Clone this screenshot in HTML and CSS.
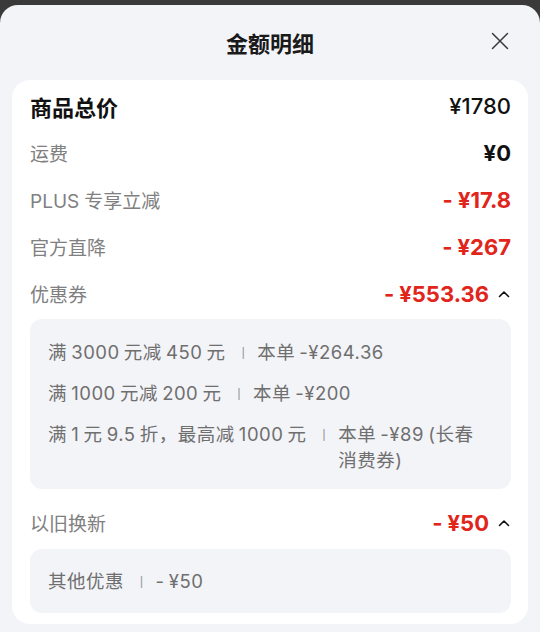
FILE: index.html
```html
<!DOCTYPE html>
<html lang="zh-CN">
<head>
<meta charset="UTF-8" />
<meta name="viewport" content="width=device-width, initial-scale=1" />
<title>金额明细</title>
<link rel="stylesheet" href="styles.css">
</head>
<body>
  <div class="sheet">
    <div class="sheet-head">
      <h1 class="sheet-title">金额明细</h1>
      <button class="close-btn" aria-label="关闭">
        <svg width="18" height="18" viewBox="0 0 18 18"><path d="M1.5 1.5L16.5 16.5M16.5 1.5L1.5 16.5" stroke="#3a3a3a" stroke-width="1.5" stroke-linecap="round" fill="none"/></svg>
      </button>
    </div>

    <div class="card">
      <div class="row row-total">
        <span class="label">商品总价</span>
        <span class="price">¥1780</span>
      </div>
      <div class="row">
        <span class="label">运费</span>
        <span class="price price-bold">¥0</span>
      </div>
      <div class="row">
        <span class="label">PLUS<span class="gap"></span>专享立减</span>
        <span class="price price-red">-<span class="gap"></span>¥17.8</span>
      </div>
      <div class="row">
        <span class="label">官方直降</span>
        <span class="price price-red">-<span class="gap"></span>¥267</span>
      </div>
      <div class="row">
        <span class="label">优惠券</span>
        <span class="price price-red">-<span class="gap"></span>¥553.36
          <svg class="caret" width="12" height="8" viewBox="0 0 12 8"><path d="M1.5 6.5L6 2L10.5 6.5" stroke="#111" stroke-width="1.6" fill="none" stroke-linecap="round" stroke-linejoin="round"/></svg>
        </span>
      </div>
      <div class="detail-box">
        <div class="detail">
          <span class="detail-rule">满 3000 元减 450 元</span>
          <span class="sep">丨</span>
          <span class="detail-amount">本单 -¥264.36</span>
        </div>
        <div class="detail">
          <span class="detail-rule">满 1000 元减 200 元</span>
          <span class="sep">丨</span>
          <span class="detail-amount">本单 -¥200</span>
        </div>
        <div class="detail">
          <span class="detail-rule">满 1 元 9.5 折，最高减 1000 元</span>
          <span class="sep">丨</span>
          <span class="detail-amount">本单 -¥89 (长春消费券)</span>
        </div>
      </div>

      <div class="row row-after-box">
        <span class="label">以旧换新</span>
        <span class="price price-red">-<span class="gap"></span>¥50
          <svg class="caret" width="12" height="8" viewBox="0 0 12 8"><path d="M1.5 6.5L6 2L10.5 6.5" stroke="#111" stroke-width="1.6" fill="none" stroke-linecap="round" stroke-linejoin="round"/></svg>
        </span>
      </div>
      <div class="detail-box detail-box-small">
        <div class="detail">
          <span class="detail-rule">其他优惠</span>
          <span class="sep">丨</span>
          <span class="detail-amount">- ¥50</span>
        </div>
      </div>
    </div>
  </div>
</body>
</html>
```

FILE: styles.css
```css
body {
  margin: 0;
  background: #3a3a3a;
  font-family: Inter, "Noto Sans CJK SC", sans-serif;
}

/* 底部弹层 */
.sheet {
  margin-top: 5px;
  height: 627px;
  background: #f3f4f8;
  border-radius: 18px 18px 0 0;
  overflow: hidden;
}

.sheet-head {
  position: relative;
  height: 75px;
  display: flex;
  align-items: center;
  justify-content: center;
}

.sheet-title {
  margin: 0;
  font-family: "Noto Sans CJK SC", sans-serif;
  font-size: 22px;
  font-weight: 700;
  color: #1a1a1a;
  line-height: 1;
  padding-bottom: 2px;
}

.close-btn {
  position: absolute;
  right: 31px;
  top: 27px;
  width: 18px;
  height: 18px;
  padding: 0;
  border: none;
  background: none;
  display: flex;
}

/* 白色卡片 */
.card {
  margin: 0 12px;
  background: #fff;
  border-radius: 18px;
  padding: 2px 17px 11px 18px;
}

.row {
  height: 47px;
  display: flex;
  align-items: center;
  justify-content: space-between;
}

.label {
  font-size: 19px;
  color: #808080;
}

.gap {
  display: inline-block;
  width: 5px;
}

.row-total .label {
  font-family: "Noto Sans CJK SC", sans-serif;
  font-size: 22px;
  font-weight: 700;
  color: #111;
}

.price {
  font-size: 22px;
  font-weight: 500;
  color: #111;
  display: flex;
  align-items: center;
}

.price-bold {
  font-weight: 700;
}

.price-red {
  font-weight: 700;
  color: #e1251b;
}

.caret {
  margin-left: 9px;
  margin-right: 1px;
}

/* 明细灰框 */
.detail-box {
  margin: 2px 0 0 0;
  background: #f3f4f8;
  border-radius: 12px;
  padding: 20px 24px 16px 18px;
  display: flex;
  flex-direction: column;
  gap: 15px;
}

.detail {
  display: flex;
  font-size: 18.5px;
  line-height: 26px;
  letter-spacing: 0.5px;
  word-spacing: -1.5px;
  color: #6f6f6f;
}

.detail-rule {
  flex-shrink: 0;
}

.sep {
  flex-shrink: 0;
  color: #9a9a9a;
  font-size: 13px;
  margin: 0 7px 0 11px;
}

.row-after-box {
  margin-top: 10px;
}

.detail-box-small {
  margin-top: 3px;
  padding: 19px 16px 19px 18px;
}
```
